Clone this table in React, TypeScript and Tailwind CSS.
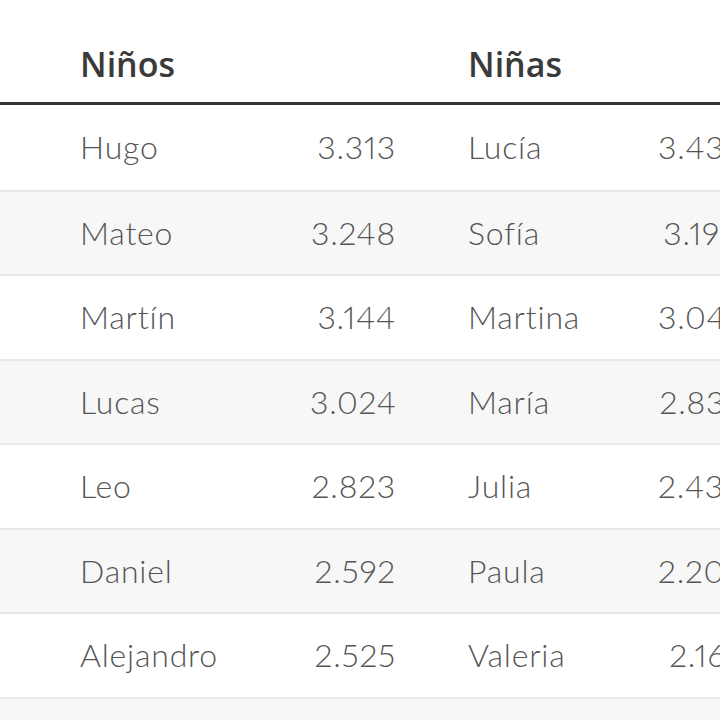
import React from "react";

const rows: [string, string, string, string][] = [
  ["Hugo", "3.313", "Lucía", "3.436"],
  ["Mateo", "3.248", "Sofía", "3.195"],
  ["Martín", "3.144", "Martina", "3.044"],
  ["Lucas", "3.024", "María", "2.831"],
  ["Leo", "2.823", "Julia", "2.437"],
  ["Daniel", "2.592", "Paula", "2.201"],
  ["Alejandro", "2.525", "Valeria", "2.161"],
  ["", "", "", ""],
];

export default function App() {
  return (
    <div
      className="w-[720px] h-[720px] overflow-hidden bg-white"
      style={{ fontFamily: "Lato, 'Liberation Sans', sans-serif" }}
    >
      <div className="w-[800px]">
        <div
          className="flex h-[102px] items-end pb-[21px] pl-[80px] text-[34px] font-semibold text-[#3a3a3a] leading-none"
          style={{ fontFamily: "'Open Sans', Lato, sans-serif" }}
        >
          <div className="w-[388px]">Niños</div>
          <div>Niñas</div>
        </div>
        <div className="h-[3px] bg-[#333]" />
        {rows.map((r, i) => (
          <div
            key={i}
            className={`flex items-center h-[84.5px] pl-[80px] text-[32px] font-light text-[#555] whitespace-nowrap proportional-nums tracking-[0.8px] ${
              i > 0 ? "border-t-2 border-[#e8e8e8]" : ""
            } ${i % 2 === 1 ? "bg-[#f7f7f7]" : "bg-white"}`}
          >
            <div className="w-[230px]">{r[0]}</div>
            <div className="w-[86px] text-right">{r[1]}</div>
            <div className="w-[72px]" />
            <div className="w-[190px]">{r[2]}</div>
            <div className="w-[80px] text-right">{r[3]}</div>
          </div>
        ))}
      </div>
    </div>
  );
}
